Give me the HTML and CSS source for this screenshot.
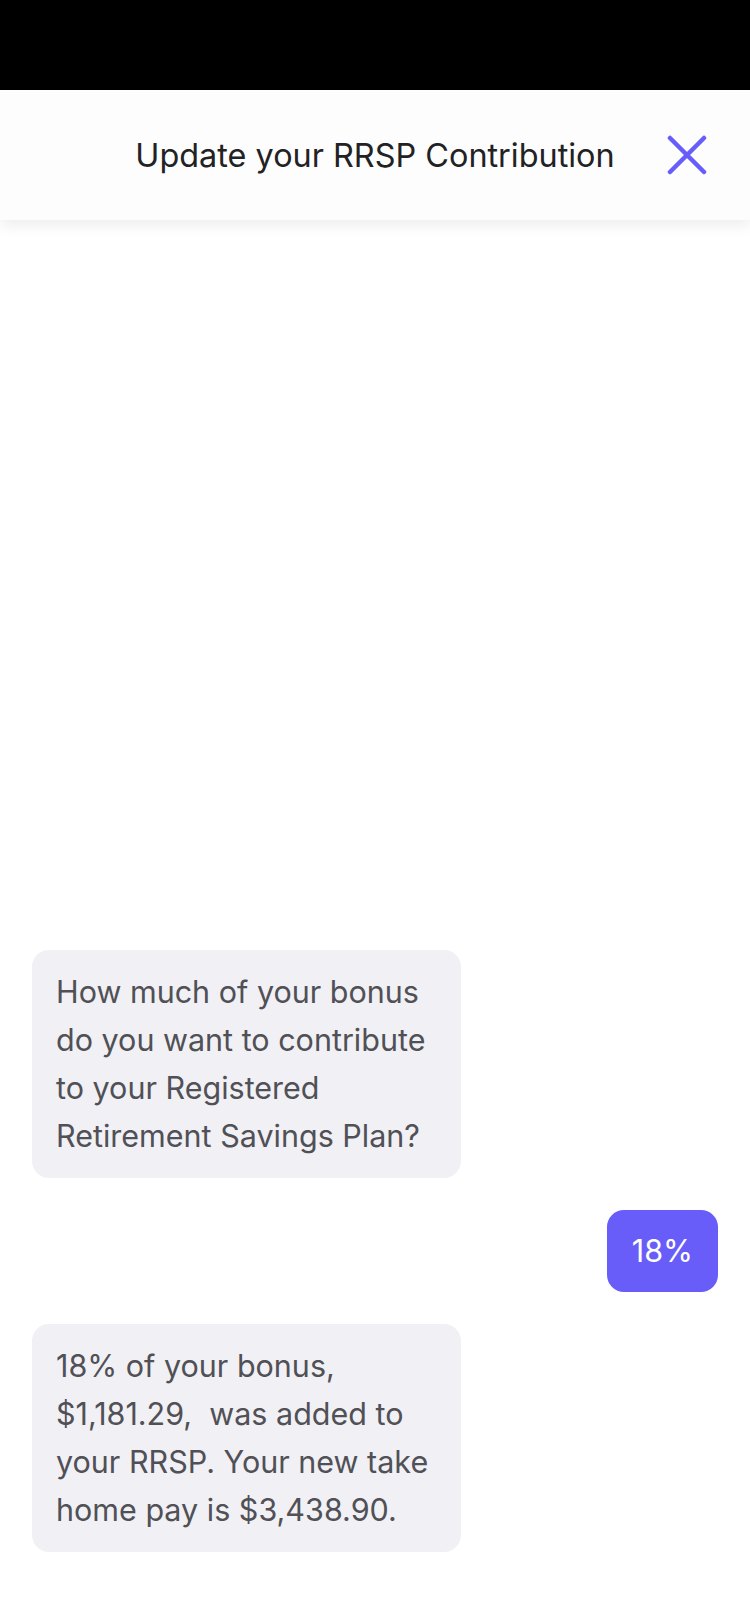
FILE: index.html
```html
<!DOCTYPE html>
<html lang="en">
<head>
<meta charset="utf-8">
<title>Update your RRSP Contribution</title>
<link rel="stylesheet" href="styles.css">
</head>
<body>
<div class="screen">
  <div class="status-bar"></div>
  <header class="header">
    <span class="spacer"></span>
    <h1 class="title">Update your RRSP Contribution</h1>
    <button class="close" aria-label="Close">
      <svg width="40" height="40" viewBox="0 0 40 40">
        <path d="M3 3 L37 37 M37 3 L3 37" stroke="#675dfa" stroke-width="4.5" stroke-linecap="round" fill="none"/>
      </svg>
    </button>
  </header>
  <main class="chat">
    <div class="bubble bot">How much of your bonus do you want to contribute to your Registered Retirement Savings Plan?</div>
    <div class="bubble user">18%</div>
    <div class="bubble bot">18% of your bonus, $1,181.29,&nbsp; was added to your RRSP. Your new take home pay is $3,438.90.</div>
  </main>
</div>
</body>
</html>
```
FILE: styles.css
```css
* { box-sizing: border-box; }
html, body { margin: 0; padding: 0; background: #ffffff; }
body { font-family: Inter, "Noto Sans", "Liberation Sans", sans-serif; }
.screen {
  width: 750px;
  height: 1624px;
  display: flex;
  flex-direction: column;
  overflow: hidden;
}
.status-bar {
  height: 90px;
  flex: 0 0 90px;
  background: #000000;
}
.header {
  flex: 0 0 130px;
  height: 130px;
  background: #fdfdfd;
  box-shadow: 0 6px 14px rgba(0, 0, 0, 0.07);
  display: grid;
  grid-template-columns: 1fr auto 1fr;
  align-items: center;
  position: relative;
  z-index: 1;
}
.title {
  margin: 0;
  font-size: 32.4px;
  font-weight: 400;
  color: #222224;
  letter-spacing: 0;
}
.close {
  justify-self: end;
  margin-right: 43px;
  width: 40px;
  height: 40px;
  padding: 0;
  border: 0;
  background: none;
  display: flex;
}
.chat {
  flex: 1;
  display: flex;
  flex-direction: column;
  justify-content: flex-end;
  gap: 32px;
  padding: 0 32px 72px;
}
.bubble {
  font-size: 30.5px;
  line-height: 48px;
  letter-spacing: 0;
  border-radius: 17px;
}
.bot {
  align-self: flex-start;
  width: 429px;
  padding: 18px 24px;
  background: #f0f0f5;
  color: #505056;
}
.user {
  align-self: flex-end;
  padding: 17px 25px;
  background: #685df9;
  color: #ffffff;
}
```
